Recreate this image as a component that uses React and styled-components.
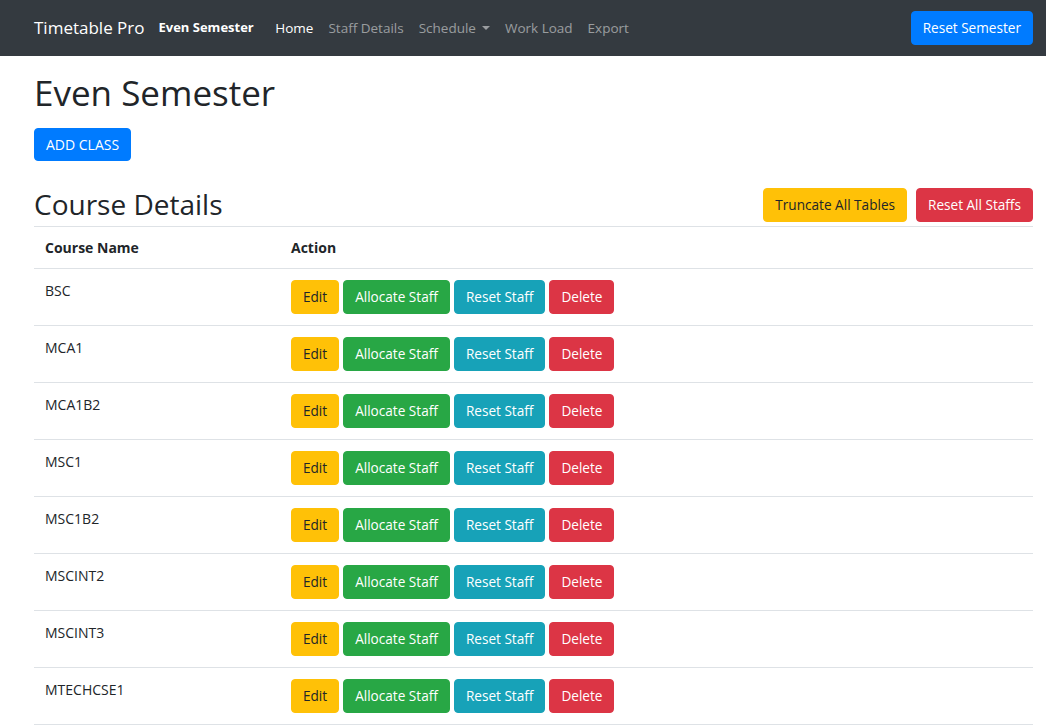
import styled, { createGlobalStyle, css } from "styled-components";

const GlobalStyle = createGlobalStyle`
  * {
    box-sizing: border-box;
  }
  body {
    margin: 0;
    font-family: "Segoe UI", "Open Sans", "Noto Sans", sans-serif;
    font-size: 14px;
    line-height: 1.5;
    color: #212529;
    background: #fff;
  }
`;

const variants = {
  primary: css`
    background: #007bff;
    border-color: #007bff;
    color: #fff;
  `,
  success: css`
    background: #28a745;
    border-color: #28a745;
    color: #fff;
  `,
  info: css`
    background: #17a2b8;
    border-color: #17a2b8;
    color: #fff;
  `,
  danger: css`
    background: #dc3545;
    border-color: #dc3545;
    color: #fff;
  `,
  warning: css`
    background: #ffc107;
    border-color: #ffc107;
    color: #212529;
  `,
};

const courses = [
  "BSC",
  "MCA1",
  "MCA1B2",
  "MSC1",
  "MSC1B2",
  "MSCINT2",
  "MSCINT3",
  "MTECHCSE1",
];

const App = () => {
  return (
    <>
      <GlobalStyle />
      <Navbar>
        <Brand>Timetable Pro</Brand>
        <SubBrand>Even Semester</SubBrand>
        <NavList>
          <NavLink active>Home</NavLink>
          <NavLink>Staff Details</NavLink>
          <NavLink>
            Schedule <Caret />
          </NavLink>
          <NavLink>Work Load</NavLink>
          <NavLink>Export</NavLink>
        </NavList>
        <Button variant="primary">Reset Semester</Button>
      </Navbar>
      <Page>
        <Title>Even Semester</Title>
        <Button variant="primary" big>
          ADD CLASS
        </Button>
        <SectionHeader>
          <SectionTitle>Course Details</SectionTitle>
          <ButtonGroup>
            <Button variant="warning">Truncate All Tables</Button>
            <Button variant="danger">Reset All Staffs</Button>
          </ButtonGroup>
        </SectionHeader>
        <Table>
          <thead>
            <tr>
              <Th first>Course Name</Th>
              <Th>Action</Th>
            </tr>
          </thead>
          <tbody>
            {courses.map((c) => (
              <tr key={c}>
                <Td>{c}</Td>
                <Td>
                  <Actions>
                    <Button variant="warning">Edit</Button>
                    <Button variant="success">Allocate Staff</Button>
                    <Button variant="info">Reset Staff</Button>
                    <Button variant="danger">Delete</Button>
                  </Actions>
                </Td>
              </tr>
            ))}
          </tbody>
        </Table>
      </Page>
    </>
  );
};

export default App;

const Navbar = styled.nav`
  display: flex;
  align-items: center;
  height: 56px;
  padding: 0 13px 0 34px;
  background: #343a40;
`;

const Brand = styled.span`
  font-size: 17px;
  color: #fff;
  margin-right: 14px;
  white-space: nowrap;
`;

const SubBrand = styled.span`
  font-size: 13px;
  font-weight: 700;
  color: #fff;
  margin-right: 14px;
  white-space: nowrap;
`;

const NavList = styled.div`
  display: flex;
  flex: 1;
`;

const NavLink = styled.a`
  display: flex;
  align-items: center;
  padding: 0 7.5px;
  font-size: 13.5px;
  color: ${(p) => (p.active ? "#fff" : "rgba(255, 255, 255, 0.5)")};
  white-space: nowrap;
  cursor: pointer;
`;

const Caret = styled.span`
  display: inline-block;
  margin-left: 6px;
  border-top: 4px solid rgba(255, 255, 255, 0.5);
  border-left: 4px solid transparent;
  border-right: 4px solid transparent;
`;

const Button = styled.button`
  display: inline-block;
  font-family: inherit;
  font-size: 13.6px;
  line-height: 22px;
  padding: 5px 11px;
  border: 1px solid transparent;
  border-radius: 4px;
  white-space: nowrap;
  cursor: pointer;
  ${(p) => variants[p.variant]}
  ${(p) =>
    p.big &&
    css`
      font-size: 14px;
      line-height: 21px;
      padding: 5px 11px;
    `}
`;

const Page = styled.main`
  padding: 0 13px 0 34px;
`;

const Title = styled.h1`
  margin: 16px 0 14px;
  font-size: 35px;
  font-weight: 500;
  line-height: 1.2;
`;

const SectionHeader = styled.div`
  display: flex;
  align-items: center;
  justify-content: space-between;
  margin-top: 27px;
  margin-bottom: 4px;
`;

const SectionTitle = styled.h2`
  margin: 0;
  font-size: 28px;
  font-weight: 500;
  line-height: 1.2;
`;

const ButtonGroup = styled.div`
  display: flex;
  gap: 9px;
`;

const Table = styled.table`
  width: 100%;
  border-collapse: collapse;
`;

const Th = styled.th`
  text-align: left;
  padding: 10px 12px 10px 11px;
  font-weight: 700;
  border-top: 1px solid #dee2e6;
  border-bottom: 1px solid #dee2e6;
  width: ${(p) => (p.first ? "246px" : "auto")};
`;

const Td = styled.td`
  vertical-align: top;
  padding: 11px 12px 11px 11px;
  border-bottom: 1px solid #dee2e6;
`;

const Actions = styled.div`
  display: flex;
  gap: 4px;
`;
